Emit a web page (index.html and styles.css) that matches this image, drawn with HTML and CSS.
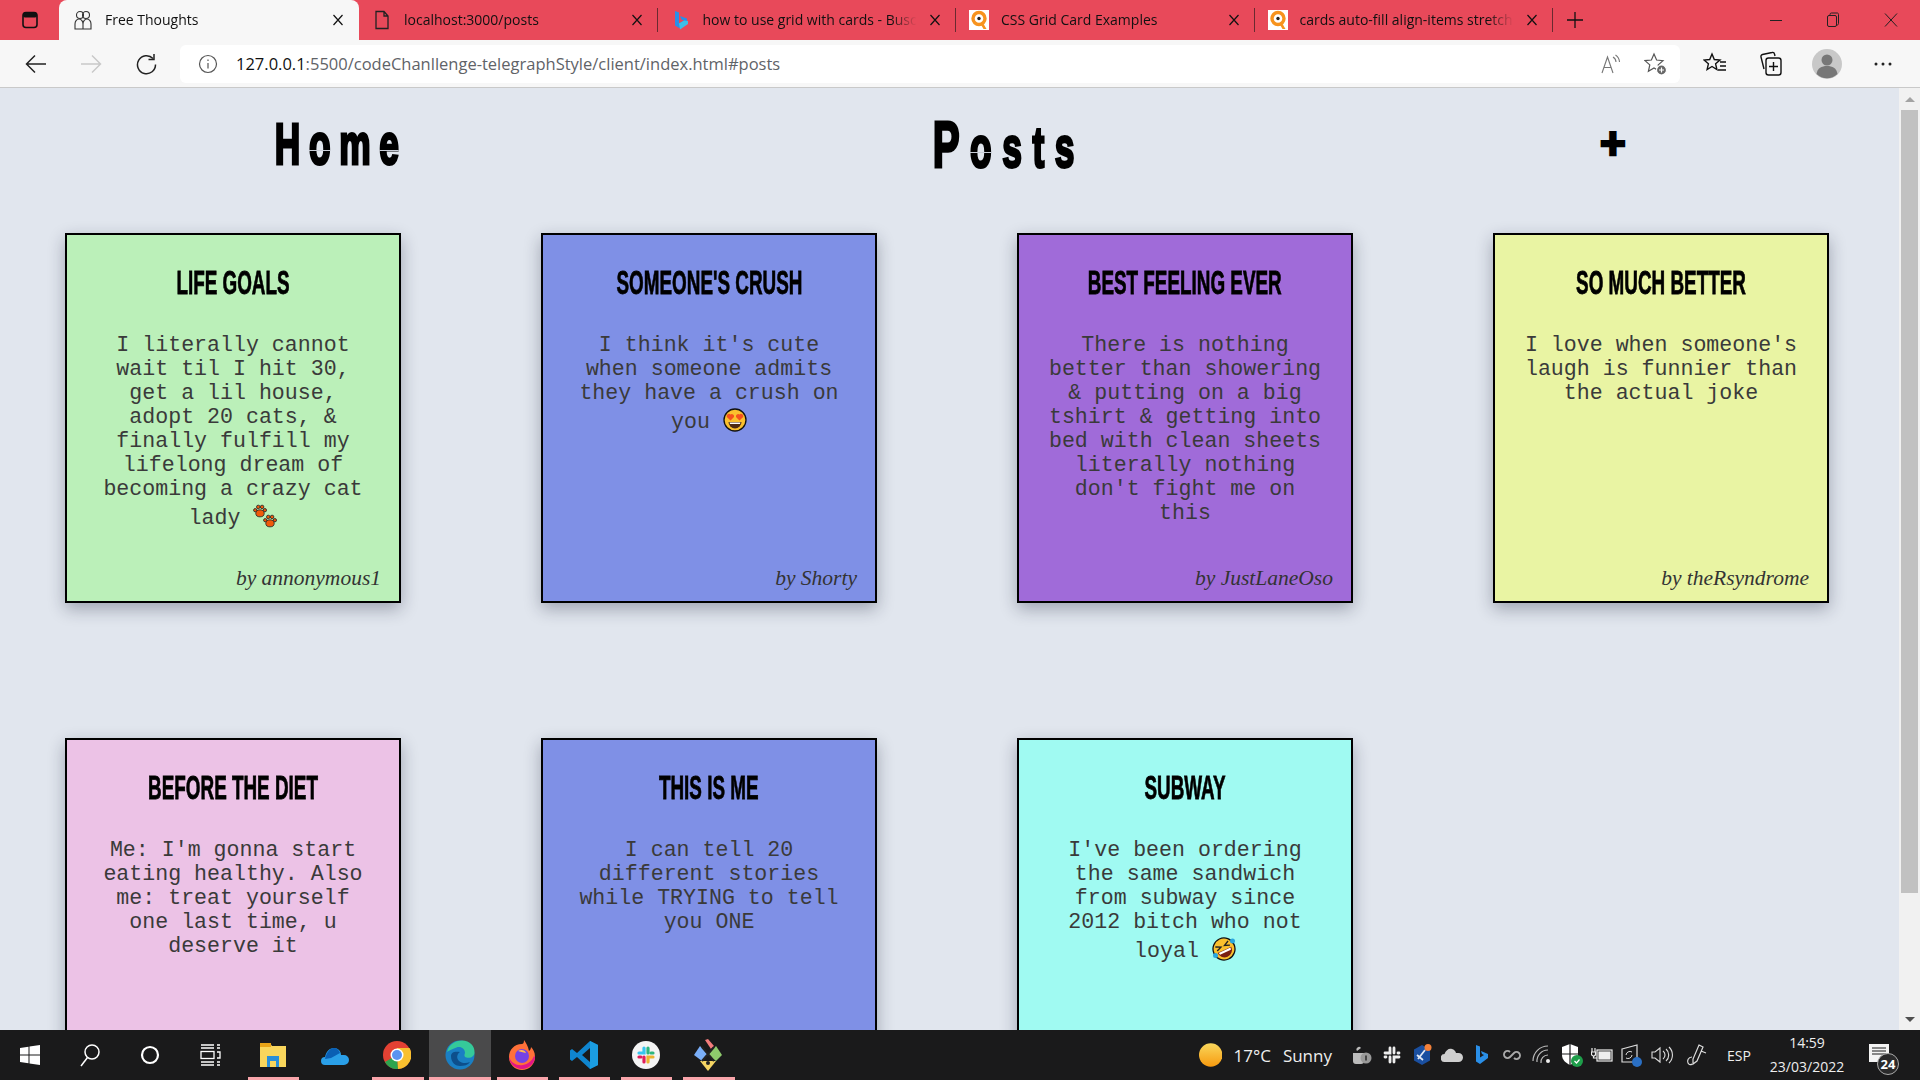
FILE: index.html
```html
<!DOCTYPE html>
<html lang="en">
<head>
<meta charset="utf-8">
<title>Free Thoughts</title>
<link rel="stylesheet" href="styles.css">
</head>
<body>
<svg class="defs" width="0" height="0">
  <defs>
    <symbol id="q" viewBox="0 0 20 20"><rect width="20" height="20" fill="#fff"/><circle cx="10" cy="8.5" r="6" fill="none" stroke="#f7931e" stroke-width="3.4"/><circle cx="10" cy="8.5" r="1.7" fill="#222"/><path d="M11 13l3.5 6h3l-3.500-6z" fill="#f7931e"/></symbol>
    <symbol id="x" viewBox="0 0 12 12"><path d="M1.500 1l9 10M10.500 1l-9 10" stroke="#111" stroke-width="1.200" fill="none"/></symbol>
    <symbol id="paw" viewBox="0 0 12 12"><ellipse cx="6" cy="8" rx="3.600" ry="3"/><circle cx="1.900" cy="5.300" r="1.400"/><circle cx="4.500" cy="2.500" r="1.500"/><circle cx="7.800" cy="2.500" r="1.500"/><circle cx="10.200" cy="5.300" r="1.400"/></symbol>
  </defs>
</svg>
<div class="app">
  <div class="tabbar">
    <div class="win-btn">
      <svg width="18" height="18" viewBox="0 0 18 18"><rect x="2" y="1.500" width="14" height="15" rx="3" fill="none" stroke="#111" stroke-width="1.600"/><rect x="2" y="1.500" width="14" height="5" rx="2" fill="#111"/></svg>
    </div>
    <div class="tab tab-active">
      <svg class="tab-icon" width="20" height="22" viewBox="0 0 20 22" fill="none" stroke="#333" stroke-width="1.100"><circle cx="7" cy="6" r="3.500"/><circle cx="13" cy="6" r="3.500"/><path d="M2 20v-5c0-3 2-5 4-5s4 2 4 5c0-3 2-5 4-5s4 2 4 5v5zM10 15v5M3 20h14"/></svg>
      <span class="tab-title">Free Thoughts</span>
      <svg class="tab-close" width="12" height="12"><use href="#x"/></svg>
    </div>
    <div class="tab">
      <svg class="tab-icon" width="16" height="20" viewBox="0 0 16 20" fill="none" stroke="#222" stroke-width="1.300"><path d="M2 1.500h8l4 4.500v12.500H2zM10 1.500v4.500h4"/></svg>
      <span class="tab-title">localhost:3000/posts</span>
      <svg class="tab-close" width="12" height="12"><use href="#x"/></svg>
    </div>
    <div class="tab">
      <svg class="tab-icon" width="16" height="20" viewBox="0 0 16 20"><path d="M2 1l4 1.500v11l5-3-2.500-1-1.500-3.500 7 2.500v4l-8 5.500-4-2.500z" fill="#2a8fe8"/><path d="M6 13.500l5-3 4 .5v3l-8 5.500z" fill="#3ec0e8"/></svg>
      <span class="tab-title">how to use grid with cards - Busca</span>
      <svg class="tab-close" width="12" height="12"><use href="#x"/></svg>
    </div>
    <div class="tab">
      <svg class="tab-icon" width="20" height="20"><use href="#q"/></svg>
      <span class="tab-title">CSS Grid Card Examples</span>
      <svg class="tab-close" width="12" height="12"><use href="#x"/></svg>
    </div>
    <div class="tab">
      <svg class="tab-icon" width="20" height="20"><use href="#q"/></svg>
      <span class="tab-title">cards auto-fill align-items stretch</span>
      <svg class="tab-close" width="12" height="12"><use href="#x"/></svg>
    </div>
    <div class="new-tab">
      <svg width="18" height="18" viewBox="0 0 18 18"><path d="M9 1v16M1 9h16" stroke="#111" stroke-width="1.300"/></svg>
    </div>
    <div class="win-controls">
      <svg width="12" height="12" viewBox="0 0 12 12"><path d="M0 6.500h12" stroke="#222" stroke-width="1"/></svg>
      <svg width="14" height="16" viewBox="0 0 14 16" fill="none" stroke="#222"><rect x="1.500" y="3.500" width="9" height="11" rx="1.500"/><path d="M4 3.500v-1a1.500 1.500 0 0 1 1.500-1.500h6a1.500 1.500 0 0 1 1 1.500v9a1.500 1.500 0 0 1-2 1.500"/></svg>
      <svg width="14" height="14" viewBox="0 0 14 14"><path d="M1 .5l12 13M13 .5l-12 13" stroke="#222" stroke-width="1"/></svg>
    </div>
  </div>

  <div class="toolbar">
    <div class="tool-btn">
      <svg width="22" height="20" viewBox="0 0 22 20" fill="none" stroke="#222" stroke-width="1.500"><path d="M21 10H2M10 1.500L1.500 10l8.500 8.500"/></svg>
    </div>
    <div class="tool-btn">
      <svg width="22" height="20" viewBox="0 0 22 20" fill="none" stroke="#c9c9c9" stroke-width="1.500"><path d="M1 10h19M12 1.500l8.500 8.500-8.500 8.500"/></svg>
    </div>
    <div class="tool-btn">
      <svg width="22" height="22" viewBox="0 0 22 22" fill="none" stroke="#222" stroke-width="1.500"><path d="M18 5.500a9 9 0 1 0 2.500 6"/><path d="M19 1v5.500h-5.500"/></svg>
    </div>
    <div class="address">
      <svg class="info" width="20" height="20" viewBox="0 0 20 20" fill="none" stroke="#555" stroke-width="1.200"><circle cx="10" cy="10" r="8.500"/><path d="M10 9v5.500M10 5.500v1.600"/></svg>
      <span class="url"><span class="url-host">127.0.0.1</span>:5500/codeChanllenge-telegraphStyle/client/index.html#posts</span>
      <div class="addr-right">
        <svg width="22" height="20" viewBox="0 0 22 20" fill="none" stroke="#777" stroke-width="1.100"><path d="M2 19L7.500 3 13 19M4 13.500h7"/><path d="M13 3a6 6 0 0 1 3 5M15.500 1a9 9 0 0 1 4 7"/></svg>
        <svg width="24" height="24" viewBox="0 0 24 24" fill="none" stroke="#555" stroke-width="1.200"><path d="M10 2l2.600 6 6.400.6-4.800 4.300 1.400 6.400L10 16l-5.600 3.300 1.400-6.400L1 8.600l6.400-.6z"/><circle cx="17.500" cy="18" r="5" fill="#666" stroke="#fff"/><path d="M17.500 15.500v5M15 18h5" stroke="#fff"/></svg>
      </div>
    </div>
    <div class="tool-btn tool-right">
      <svg width="24" height="24" viewBox="0 0 24 24" fill="none" stroke="#111" stroke-width="1.400"><path d="M9 2l2.300 5.500 5.700.5-4.400 3.800 1.300 5.700L9 14.500 4.100 17.500l1.300-5.700L1 8l5.700-.5z"/><path d="M17 10h6M17 14h6M15 18h8"/></svg>
    </div>
    <div class="tool-btn tool-plain">
      <svg width="24" height="26" viewBox="0 0 24 26" fill="none" stroke="#111" stroke-width="1.400"><path d="M5 18L2 6a2 2 0 0 1 1.500-2.500L13 1.500a2 2 0 0 1 2.500 1.500l.5 2"/><rect x="7" y="7" width="15" height="17" rx="2.500"/><path d="M14.500 11v9M10 15.500h9"/></svg>
    </div>
    <div class="tool-btn tool-plain">
      <svg width="30" height="30" viewBox="0 0 30 30"><circle cx="15" cy="15" r="15" fill="#c8c8c8"/><circle cx="15" cy="11" r="5.500" fill="#777"/><path d="M4.500 25c1-6 5-8 10.500-8s9.500 2 10.500 8a15 15 0 0 1-21 0z" fill="#777"/></svg>
    </div>
    <div class="tool-btn tool-plain">
      <svg width="18" height="4" viewBox="0 0 18 4" fill="#222"><circle cx="2" cy="2" r="1.500"/><circle cx="9" cy="2" r="1.500"/><circle cx="16" cy="2" r="1.500"/></svg>
    </div>
  </div>

  <div class="viewport">
    <main class="page">
      <nav class="site-nav">
        <a class="nav-link nav-home"><span class="nav-text">H<span class="stencil">o</span>m<span class="stencil">e</span></span></a>
        <a class="nav-link nav-posts"><span class="nav-text"><span class="big-cap">P</span><span class="stencil">o</span>sts</span></a>
        <a class="nav-link nav-add"><span class="nav-plus">+</span></a>
      </nav>
      <section class="cards">
        <article class="card c-green">
          <h2><span>Life Goals</span></h2>
          <p>I literally cannot wait til I hit 30, get a lil house, adopt 20 cats, &amp; finally fulfill my lifelong dream of becoming a crazy cat lady <svg class="emoji" width="24" height="24" viewBox="0 0 24 24"><g fill="#f05a0a" stroke="#222" stroke-width=".7"><use href="#paw" x="0" y="0" width="14" height="14"/><use href="#paw" x="10" y="10" width="14" height="14"/></g></svg></p>
          <div class="author">by annonymous1</div>
        </article>
        <article class="card c-blue">
          <h2><span>Someone's Crush</span></h2>
          <p>I think it's cute when someone admits they have a crush on you <svg class="emoji" width="24" height="24" viewBox="0 0 24 24"><circle cx="12" cy="12" r="11" fill="#fbc02d" stroke="#111" stroke-width="1.300"/><path d="M7.500 12.500L3.800 9a2.300 2.300 0 0 1 3.700-2.500A2.300 2.300 0 0 1 11 9zM16.500 12.500L13 9a2.300 2.300 0 0 1 3.500-2.500A2.300 2.300 0 0 1 20.200 9z" fill="#f4511e"/><path d="M5.500 14h13a6.500 6.500 0 0 1-13 0z" fill="#4e2a12"/><path d="M6.500 14.500h11l-.5 1.500H7z" fill="#fff"/></svg></p>
          <div class="author">by Shorty</div>
        </article>
        <article class="card c-purple">
          <h2><span>Best Feeling Ever</span></h2>
          <p>There is nothing better than showering &amp; putting on a big tshirt &amp; getting into bed with clean sheets literally nothing don't fight me on this</p>
          <div class="author">by JustLaneOso</div>
        </article>
        <article class="card c-yellow">
          <h2><span>So Much Better</span></h2>
          <p>I love when someone's laugh is funnier than the actual joke</p>
          <div class="author">by theRsyndrome</div>
        </article>
        <article class="card c-pink">
          <h2><span>Before The Diet</span></h2>
          <p>Me: I'm gonna start eating healthy. Also me: treat yourself one last time, u deserve it</p>
        </article>
        <article class="card c-blue">
          <h2><span>This Is Me</span></h2>
          <p>I can tell 20 different stories while TRYING to tell you ONE</p>
        </article>
        <article class="card c-cyan">
          <h2><span>Subway</span></h2>
          <p>I've been ordering the same sandwich from subway since 2012 bitch who not loyal <svg class="emoji" width="24" height="24" viewBox="0 0 24 24"><g transform="rotate(-25 12 12)"><circle cx="12" cy="12" r="11" fill="#fbc02d" stroke="#111" stroke-width="1.300"/><path d="M4.500 13h15a7.500 7.500 0 0 1-15 0z" fill="#7a1f12"/><path d="M5.500 13.500h13l-.5 2H6z" fill="#fff"/><path d="M5 6.500l5 2.500-5 2M19 6.500l-5 2.500 5 2" fill="none" stroke="#222" stroke-width="1.400"/></g><circle cx="3.500" cy="18.500" r="2.500" fill="#29a8e0"/><circle cx="20.500" cy="4" r="2.500" fill="#29a8e0"/></svg></p>
        </article>
      </section>
    </main>
    <div class="scrollbar">
      <div class="sb-arrow sb-up"></div>
      <div class="sb-track"><div class="sb-thumb"></div></div>
      <div class="sb-arrow sb-down"></div>
    </div>
  </div>

  <footer class="taskbar">
    <div class="tb-sys">
      <svg width="22" height="22" viewBox="0 0 22 22" fill="#fff"><path d="M1 4l8.500-1.200v7.700H1zM10.500 2.600L21 1v9.500H10.500zM1 11.500h8.500v7.700L1 18zM10.500 11.500H21V21l-10.500-1.500z"/></svg>
    </div>
    <div class="tb-sys">
      <svg width="22" height="24" viewBox="0 0 22 24" fill="none" stroke="#fff" stroke-width="1.500"><circle cx="13" cy="9" r="7"/><path d="M8.500 14.500L2 23"/></svg>
    </div>
    <div class="tb-sys">
      <svg width="20" height="20" viewBox="0 0 20 20" fill="none" stroke="#fff" stroke-width="2.200"><circle cx="10" cy="10" r="8"/></svg>
    </div>
    <div class="tb-sys">
      <svg width="22" height="22" viewBox="0 0 22 22" fill="none" stroke="#fff" stroke-width="1.300"><path d="M2 1h13M2 4h13M2 18h13M2 21h13M18 1h3M18 4h3M18 18h3M18 21h3"/><rect x="2" y="7.500" width="13" height="7"/><path d="M18 8h3v6h-3"/></svg>
    </div>
    <div class="tb-gap"></div>
    <div class="tb-app running">
      <svg width="28" height="28" viewBox="0 0 28 28"><path d="M1 2h10l2 3h14v21H1z" fill="#f9d65c"/><path d="M1 2h11v4H1z" fill="#e8a317"/><path d="M8 26V15h12v11h-3v-6h-6v6z" fill="#2a8fd8"/></svg>
    </div>
    <div class="tb-app">
      <svg width="28" height="22" viewBox="0 0 28 22"><path d="M4 21a4 4 0 0 1 0-8c1-5 4-9 9-9 4 0 7 3 7 7h3a5 5 0 0 1 0 10z" fill="#2a9fe8"/><path d="M4 15c1-5 4-11 9-11 3 0 5 2 6 5l-9 5z" fill="#0a5fb4"/></svg>
    </div>
    <div class="tb-app running">
      <svg width="28" height="28" viewBox="0 0 28 28"><circle cx="14" cy="14" r="14" fill="#e34133"/><path d="M14 14L2 21a14 14 0 0 0 13 7z" fill="#2da44e"/><path d="M14 7h12.500A14 14 0 0 1 15 28z" fill="#f9c02f"/><circle cx="14" cy="14" r="6.500" fill="#fff"/><circle cx="14" cy="14" r="5" fill="#5b94f0"/></svg>
    </div>
    <div class="tb-app running active">
      <svg width="30" height="30" viewBox="0 0 30 30"><circle cx="15" cy="15" r="14.500" fill="#1a7fc4"/><path d="M2 12C4 3 12 .5 17 .5c8 0 13 6 12.500 12 0 4-4 6-8 5-3-.8-2-3-1.500-4.500C20 9 16 6 11.500 7.500 7 9 3.500 11 2 12z" fill="#35c99a"/><path d="M6 16c0 7 5 10 9 10 4 0 8-1 10-4-4 2-9 1-11-1-3-3-2-7 1-9-5-1-9 0-9 4z" fill="#0d4f8c"/></svg>
    </div>
    <div class="tb-app running">
      <svg width="28" height="30" viewBox="0 0 28 30"><path d="M14 4C6 4 1 10 1 17a13 13 0 0 0 26 0c0-5-2-8-4-10 0 2-1 3-2 4-1-5-3-8-5-11 0 3-1 4-2 4z" fill="#ff7139"/><path d="M14 29A13 13 0 0 1 1 17c2 6 8 9 14 8 5-.8 9-4 11-9l1 1a13 13 0 0 1-13 12z" fill="#e31587"/><circle cx="14" cy="16" r="7" fill="#7542e5"/><path d="M10 11c3-2 7-1 8 2-3-1-6-1-8-2z" fill="#ffbd4f"/></svg>
    </div>
    <div class="tb-app running">
      <svg width="30" height="30" viewBox="0 0 30 30"><path d="M21 1l8 4v20l-8 4-13-12-5 4-2-1.500V10.500L3 9l5 4zM21 8l-8 7 8 7z" fill="#0f85cf"/><path d="M21 1l8 4v20l-8 4z" fill="#1b9de2"/></svg>
    </div>
    <div class="tb-app running">
      <svg width="28" height="28" viewBox="0 0 28 28"><circle cx="14" cy="14" r="14" fill="#f4f4f4"/><g fill="none" stroke-width="3.200" stroke-linecap="round"><path d="M12 7v5H7" stroke="#36c5f0"/><path d="M16 7v5" stroke="#2eb67d"/><path d="M21 12h-2" stroke="#2eb67d"/><path d="M21 16h-5v5" stroke="#ecb22e"/><path d="M12 21v-5" stroke="#e01e5a"/><path d="M7 16h2" stroke="#e01e5a"/></g></svg>
    </div>
    <div class="tb-app running">
      <svg width="30" height="32" viewBox="0 0 30 32"><path d="M15 16L7 7 1 16l8 6z" fill="#7aaef7"/><path d="M15 16l8-9 6 9-6 6z" fill="#8ecb6c"/><path d="M7 22h16l-8 10z" fill="#f5d563"/><path d="M12 1l3-1 6 7-3 3z" fill="#f47c7c"/><path d="M9 8l12 14M21 8L9 22" stroke="#222" stroke-width="2"/><circle cx="15" cy="24" r="2" fill="#222"/></svg>
    </div>
    <div class="tray">
      <div class="weather">
        <svg width="24" height="24" viewBox="0 0 24 24"><defs><linearGradient id="sun" x1="0" y1="0" x2="0" y2="1"><stop offset="0" stop-color="#f9d75c"/><stop offset="1" stop-color="#f79a0f"/></linearGradient></defs><circle cx="12" cy="12" r="12" fill="url(#sun)"/></svg>
        <span class="temp">17°C</span><span class="sky">Sunny</span>
      </div>
      <div class="tray-icon"><svg width="20" height="20" viewBox="0 0 20 20"><path d="M1 8h11v8a3 3 0 0 1-3 3H4a3 3 0 0 1-3-3zM5 6a2.500 2.500 0 0 1 4-3z" fill="#bbb"/><circle cx="14" cy="13" r="5.500" fill="#999"/><path d="M14 10.500v5" stroke="#222" stroke-width="1.400"/></svg></div>
      <div class="tray-icon"><svg width="18" height="18" viewBox="0 0 18 18" fill="none" stroke="#eee" stroke-width="2.800" stroke-linecap="round"><path d="M7 2v5H2M11 2v5M16 7h-1M16 11h-5v5M7 16v-5M2 11h1"/></svg></div>
      <div class="tray-icon"><svg width="20" height="22" viewBox="0 0 20 22"><path d="M10 1l8 4.500v11L10 21l-8-4.500v-11z" fill="#1a4fa0"/><path d="M6 15l7-9M5 11l6 5" stroke="#dfe8f5" stroke-width="1.800"/><circle cx="16" cy="3.500" r="3.500" fill="#f2803a"/></svg></div>
      <div class="tray-icon"><svg width="22" height="14" viewBox="0 0 22 14"><path d="M4 14a4 4 0 0 1-.5-8C5 2 8 0 11 1c2 .5 3.500 2 4 4h2.500a4.500 4.500 0 0 1 0 9z" fill="#cfcfcf"/></svg></div>
      <div class="tray-icon"><svg width="14" height="22" viewBox="0 0 14 22"><path d="M1 1l4 1.500v11l4-2.500-2-1-1-3 7 3v4l-8 6-4-2.500z" fill="#2a8fe8"/></svg></div>
      <div class="tray-icon"><svg width="18" height="14" viewBox="0 0 18 14" fill="none" stroke="#aaa" stroke-width="1.800"><path d="M7 4a3.500 3.500 0 0 0-5 5 3.500 3.500 0 0 0 5 0l4-4a3.500 3.500 0 0 1 5 5 3.500 3.500 0 0 1-5 0"/></svg></div>
      <div class="tray-icon"><svg width="20" height="20" viewBox="0 0 20 20" fill="none" stroke="#bbb" stroke-width="1.200"><path d="M1 16A15 15 0 0 1 16 1M5 17A11 11 0 0 1 16 5M9 18a7 7 0 0 1 7-8"/><circle cx="16" cy="16" r="2" fill="#eee" stroke="none"/></svg></div>
      <div class="tray-icon"><svg width="22" height="24" viewBox="0 0 22 24"><path d="M9 1l8 3v8c0 5-4 8-8 10-4-2-8-5-8-10V4z" fill="#fff"/><path d="M9 1v21M1 11h16" stroke="#1a1a1b" stroke-width="1.200"/><circle cx="16" cy="18" r="6" fill="#1e9e4a"/><path d="M13.500 18l2 2 3-3.500" stroke="#fff" stroke-width="1.200" fill="none"/></svg></div>
      <div class="tray-icon"><svg width="22" height="16" viewBox="0 0 22 16" fill="none" stroke="#eee" stroke-width="1.200"><rect x="6" y="3" width="15" height="11"/><rect x="8" y="5" width="11" height="7" fill="#eee"/><path d="M1 1v4M4 1v4M.5 5h4v2a2 2 0 0 1-4 0zM2.500 9v2h3.500"/></svg></div>
      <div class="tray-icon"><svg width="22" height="24" viewBox="0 0 22 24"><path d="M1 6l15-4v17H1z" fill="none" stroke="#ddd" stroke-width="1.200"/><path d="M5 12a4 4 0 0 1 6-3M11 12a4 4 0 0 1-6 3" fill="none" stroke="#ddd"/><circle cx="16" cy="19" r="5" fill="#2a6fc4"/></svg></div>
      <div class="tray-icon"><svg width="22" height="18" viewBox="0 0 22 18" fill="none" stroke="#ddd" stroke-width="1.100"><path d="M1 6h3l5-4v14l-5-4H1zM12 5a5 5 0 0 1 0 8M15 3a8 8 0 0 1 0 12M18 1a11 11 0 0 1 0 16"/></svg></div>
      <div class="tray-pen"><svg width="22" height="24" viewBox="0 0 22 24" fill="none" stroke="#ddd" stroke-width="1.200"><path d="M13 2l4 2-6 14-4 3 0-5zM15 8l5 2M6 14c-4 0-5 4-4 6s3 2 4 1"/></svg></div>
      <div class="tray-lang">ESP</div>
      <div class="clock"><span>14:59</span><span>23/03/2022</span></div>
      <div class="notif">
        <svg class="notif-icon" width="20" height="18" viewBox="0 0 20 18"><path d="M0 0h20v18H0z" fill="#f4f4f4"/><path d="M3 4h14M3 7h14M3 10h14" stroke="#1a1a1b"/></svg>
        <span class="badge">24</span>
      </div>
    </div>
  </footer>
</div>
</body>
</html>
```

FILE: styles.css
```css
* { box-sizing: border-box; }
html, body { margin: 0; height: 100%; overflow: hidden; }
body { font-family: "Open Sans", "Noto Sans", sans-serif; background: #e1e6ee; }
.defs { display: block; height: 0; }
.app { display: flex; flex-direction: column; height: 1080px; width: 1920px; overflow: hidden; }

.tabbar { display: flex; height: 40px; flex: none; background: #e8495a; color: #111; }
.win-btn { width: 59px; display: flex; align-items: center; justify-content: center; }
.tab { width: 298.500px; display: flex; align-items: center; padding: 0 15px 0 12px; font-size: 14px; position: relative; }
.tab::after { content: ""; position: absolute; right: 0; top: 8px; bottom: 8px; width: 1px; background: #6a2a30; }
.tab-active { width: 300px; background: #f7f7f7; border-radius: 8px 8px 0 0; padding-left: 13px; }
.tab-active::after { display: none; }
.tab-icon { flex: none; width: 22px; }
.tab-title { flex: 1; margin-left: 11px; padding-bottom: 2px; white-space: nowrap; overflow: hidden; -webkit-mask-image: linear-gradient(to right, #000 86%, transparent 98%); mask-image: linear-gradient(to right, #000 86%, transparent 98%); }
.tab-close { flex: none; margin-left: 8px; }
.new-tab { width: 44px; display: flex; align-items: center; justify-content: center; }
.win-controls { margin-left: auto; width: 172px; display: flex; align-items: center; justify-content: space-between; padding: 0 22px 0 22px; }

.toolbar { display: flex; align-items: center; height: 48px; flex: none; background: #f7f7f7; padding-left: 8px; padding-top: 1px; border-bottom: 1px solid #c9c9c9; }
.tool-btn { width: 55px; height: 38px; padding-bottom: 1px; display: flex; align-items: center; justify-content: center; }
.tool-right { width: 56px; margin-left: 7px; }
.tool-plain { width: 56px; }
.address { margin-left: 7px; width: 1500px; height: 38px; background: #fff; border-radius: 6px; display: flex; align-items: center; padding: 0 12px 0 18px; }
.info { flex: none; }
.url { margin-left: 18px; padding-bottom: 2px; font-size: 16.500px; color: #5f6368; white-space: nowrap; }
.url-host { color: #111; }
.addr-right { margin-left: auto; display: flex; gap: 22px; align-items: center; }

.viewport { flex: 1; display: flex; min-height: 0; }
.page { flex: 1; min-width: 0; overflow: hidden; }
.site-nav { display: flex; justify-content: space-around; align-items: center; height: 112px; padding: 0 10px 0 6px; }
.nav-link { display: flex; justify-content: center; color: #000; }
.nav-home { width: 130px; }
.nav-posts { width: 146px; }
.nav-add { width: 25px; }
.nav-text { flex: none; white-space: nowrap; font-family: "Liberation Sans", sans-serif; font-weight: 700; font-size: 57px; line-height: 1; letter-spacing: 14px; margin-right: -14px; -webkit-text-stroke: 3px #000; transform: scaleX(.62); }
.nav-posts .nav-text { letter-spacing: 17px; margin-right: -17px; }
.big-cap { font-size: 65px; }
.stencil { display: inline-block; position: relative; }
.stencil::after { content: ""; position: absolute; left: 0; right: 14px; top: 34px; height: 1.500px; background: #c9ced8; }
.nav-posts .stencil::after { right: 17px; top: 33px; }
.nav-plus { font-family: "Liberation Sans", sans-serif; font-weight: 700; font-size: 44px; line-height: 1; -webkit-text-stroke: 2.500px #000; }

.cards { display: grid; grid-template-columns: repeat(4, 336px); gap: 135px 140px; padding: 33px 0 0 65px; }
.card { height: 370px; border: 2px solid #000; display: flex; flex-direction: column; padding: 27px 24px 10px; text-align: center; box-shadow: 0 6px 16px rgba(20, 25, 50, .32); }
.card h2 { margin: 0; display: flex; justify-content: center; font-family: "Liberation Sans", sans-serif; font-weight: 700; font-size: 34px; line-height: 40px; text-transform: uppercase; color: #000; }
.card h2 span { flex: none; white-space: nowrap; transform: scaleX(.555); -webkit-text-stroke: .8px #000; }
.card p { margin: 31px 0 0; font-family: "Liberation Mono", monospace; font-size: 21.600px; color: #3a3a3a; }
.emoji { vertical-align: -4px; margin-top: 3px; }
.author { margin-top: auto; margin-right: -6px; text-align: right; font-family: "Liberation Serif", serif; font-style: italic; font-size: 21.500px; line-height: 25px; color: #333; }
.c-green { background: #bbf0b9; }
.c-blue { background: #7f90e6; }
.c-purple { background: #a06bd9; }
.c-yellow { background: #e9f4a3; }
.c-pink { background: #ecc2e6; }
.c-cyan { background: #a0faf2; }

.scrollbar { width: 21px; flex: none; background: #f1f1f1; display: flex; flex-direction: column; }
.sb-arrow { height: 22px; flex: none; display: flex; align-items: center; justify-content: center; }
.sb-up::before { content: ""; border: 5px solid transparent; border-top: 0; border-bottom: 5px solid #a3a3a3; }
.sb-down::before { content: ""; border: 5px solid transparent; border-bottom: 0; border-top: 5px solid #505050; }
.sb-track { flex: 1; padding: 0 2px; }
.sb-thumb { height: 783px; background: #c1c1c1; }

.taskbar { height: 50px; flex: none; background: #1a1a1b; display: flex; align-items: stretch; color: #eee; }
.tb-sys { width: 60px; display: flex; align-items: center; justify-content: center; }
.tb-gap { width: 2px; }
.tb-app { width: 62.200px; display: flex; align-items: center; justify-content: center; position: relative; }
.running::after { content: ""; position: absolute; left: 6px; right: 5px; bottom: 0; height: 3px; background: #f9a5ab; }
.active { background: #4a4a4b; }
.active::after { left: 0; right: 0; }
.tray { margin-left: auto; display: flex; align-items: center; height: 100%; }
.weather { display: flex; align-items: center; width: 148px; font-size: 17px; padding-right: 15px; }
.temp { margin-left: 11px; }
.sky { margin-left: 12px; }
.tray-icon { width: 30px; display: flex; align-items: center; justify-content: center; }
.tray-pen { width: 40px; display: flex; align-items: center; justify-content: center; }
.tray-lang { width: 44px; font-size: 14px; text-align: center; }
.clock { width: 92px; display: flex; flex-direction: column; align-items: center; gap: 6px; font-size: 14px; line-height: 18px; }
.notif { width: 67px; height: 100%; padding: 14px 7px 0 16px; position: relative; }
.notif-icon { display: block; }
.badge { position: absolute; left: 24px; top: 23px; width: 22px; height: 22px; border-radius: 50%; background: #2a2a2b; border: 1px solid #aaa; font-size: 13px; font-weight: 700; line-height: 20px; text-align: center; color: #fff; }
```
